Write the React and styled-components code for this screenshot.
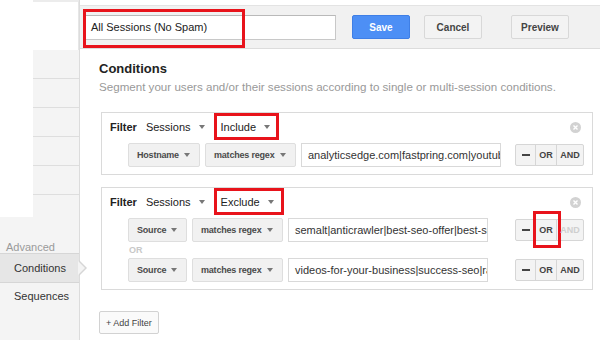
import React from 'react'
import styled, {createGlobalStyle} from 'styled-components'

const GlobalStyle = createGlobalStyle`
    html, body {
        margin: 0;
        padding: 0;
        background: #fff;
    }
    body {
        font-family: "Liberation Sans", Arial, sans-serif;
        color: #333;
    }
`

export default function App() {
    return (
        <>
            <GlobalStyle/>
            <Page>
                <Sidebar>
                    <SideTop/>
                    <SideStack>
                        <SideRow/>
                        <SideRow/>
                        <SideRow/>
                        <SideRow/>
                        <SideRow/>
                        <SideRow $last/>
                    </SideStack>
                    <SideLower>
                        <SideLabel>Advanced</SideLabel>
                        <SideItem $active>
                            Conditions
                            <Pointer/>
                        </SideItem>
                        <SideItem>Sequences</SideItem>
                    </SideLower>
                </Sidebar>

                <Main>
                    {/* top bar with segment name and actions */}
                    <TopBar>
                        <NameField>
                            All Sessions (No Spam)
                            <Highlight $top={-7} $left={-3} $w={162} $h={39}/>
                        </NameField>
                        <Btn $primary>Save</Btn>
                        <Btn $gap={14}>Cancel</Btn>
                        <Btn $gap={29}>Preview</Btn>
                    </TopBar>

                    <Content>
                        <Title>Conditions</Title>
                        <Subtitle>Segment your users and/or their sessions according to single or multi-session conditions.</Subtitle>

                        <FilterBox>
                            <FilterHead>
                                <FilterLabel>Filter</FilterLabel>
                                <Drop>Sessions<Caret/></Drop>
                                <Drop $hl>Include<Caret/></Drop>
                                <CloseIcon/>
                            </FilterHead>
                            <CondRow>
                                <Select $w={72}>Hostname<Caret/></Select>
                                <Select $w={91}>matches regex<Caret/></Select>
                                <TextField>analyticsedge.com|fastpring.com|youtube.com</TextField>
                                <Logic/>
                            </CondRow>
                        </FilterBox>

                        <FilterBox>
                            <FilterHead>
                                <FilterLabel>Filter</FilterLabel>
                                <Drop>Sessions<Caret/></Drop>
                                <Drop $hl $wide>Exclude<Caret/></Drop>
                                <CloseIcon/>
                            </FilterHead>
                            <CondRow>
                                <Select $w={59}>Source<Caret/></Select>
                                <Select $w={91}>matches regex<Caret/></Select>
                                <TextField>semalt|anticrawler|best-seo-offer|best-seo-solution</TextField>
                                <Logic orMarked andDisabled/>
                            </CondRow>
                            <OrLabel>OR</OrLabel>
                            <CondRow>
                                <Select $w={59}>Source<Caret/></Select>
                                <Select $w={91}>matches regex<Caret/></Select>
                                <TextField>videos-for-your-business|success-seo|rank-checker</TextField>
                                <Logic/>
                            </CondRow>
                        </FilterBox>

                        <AddFilter>+ Add Filter</AddFilter>
                    </Content>
                </Main>
            </Page>
        </>
    )
}

function Logic({orMarked, andDisabled}) {
    return (
        <LogicGroup>
            <LogicBtn $w={19}><Dash/></LogicBtn>
            <LogicBtn $w={20}>
                OR
                {orMarked && <Highlight $top={-9} $left={-3} $w={28} $h={37}/>}
            </LogicBtn>
            <LogicBtn $w={26} $disabled={andDisabled}>AND</LogicBtn>
        </LogicGroup>
    )
}

function CloseIcon() {
    return (
        <CloseWrap width="11" height="11" viewBox="0 0 11 11">
            <circle cx="5.5" cy="5.5" r="5.5" fill="#d2d2d2"/>
            <path d="M3.5 3.5 L7.5 7.5 M7.5 3.5 L3.5 7.5" stroke="#fff" strokeWidth="1.4"/>
        </CloseWrap>
    )
}

// layout
const Page = styled.div`
    width: 600px;
    height: 340px;
    overflow: hidden;
    display: grid;
    grid-template-columns: 80px 1fr;
`

// left navigation
const Sidebar = styled.div`
    display: flex;
    flex-direction: column;
    border-right: 1px solid #dcdcdc;
    background: #fff;
`

const SideTop = styled.div`
    height: 50px;
    margin-left: 33px;
    border-top: 2px solid #ececec;
    border-right: 1px solid #e6e6e6;
    box-sizing: border-box;
`

const SideStack = styled.div`
    margin-left: 33px;
    background: #f4f4f4;
`

const SideRow = styled.div`
    height: ${p => p.$last ? '22px' : '28px'};
    border-bottom: ${p => p.$last ? 'none' : '1px solid #dedede'};
`

const SideLower = styled.div`
    flex: 1;
    background: #f4f4f4;
    padding-top: 25px;
`

const SideLabel = styled.div`
    font-size: 11px;
    color: #9a9a9a;
    padding-left: 6px;
    line-height: 11px;
`

const SideItem = styled.div`
    position: relative;
    height: ${p => p.$active ? '28px' : '27px'};
    line-height: ${p => p.$active ? '28px' : '27px'};
    font-size: 11px;
    color: #333;
    padding-left: 14px;
    background: ${p => p.$active ? '#e6e6e6' : 'transparent'};
    border-top: ${p => p.$active ? '1px solid #d6d6d6' : 'none'};
    border-bottom: ${p => p.$active ? '1px solid #d6d6d6' : 'none'};
`

const Pointer = styled.span`
    position: absolute;
    right: -8px;
    top: 6px;
    width: 0;
    height: 0;
    border-top: 8px solid transparent;
    border-bottom: 8px solid transparent;
    border-left: 8px solid #d6d6d6;
    &::after {
        content: '';
        position: absolute;
        left: -9px;
        top: -7px;
        border-top: 7px solid transparent;
        border-bottom: 7px solid transparent;
        border-left: 7px solid #f4f4f4;
    }
`

// main area
const Main = styled.div`
    display: flex;
    flex-direction: column;
    min-width: 0;
`

const TopBar = styled.div`
    margin-top: 5px;
    height: 44px;
    box-sizing: border-box;
    background: #f1f1f1;
    border-top: 1px solid #e3e3e3;
    border-bottom: 1px solid #dcdcdc;
    display: flex;
    align-items: center;
    padding-left: 5px;
`

const NameField = styled.div`
    position: relative;
    width: 251px;
    height: 25px;
    box-sizing: border-box;
    background: #fff;
    border: 1px solid #c8c8c8;
    border-top-color: #b9b9b9;
    font-size: 11px;
    color: #222;
    line-height: 23px;
    padding-left: 5px;
    margin-right: 16px;
`

const Highlight = styled.span`
    position: absolute;
    top: ${p => p.$top}px;
    left: ${p => p.$left}px;
    width: ${p => p.$w}px;
    height: ${p => p.$h}px;
    box-sizing: border-box;
    border: 3px solid #e8131b;
    pointer-events: none;
`

const Btn = styled.div`
    width: 58px;
    height: 24px;
    margin-left: ${p => p.$gap || 0}px;
    box-sizing: border-box;
    border-radius: 2px;
    display: flex;
    align-items: center;
    justify-content: center;
    font-size: 10px;
    font-weight: bold;
    color: ${p => p.$primary ? '#fff' : '#444'};
    background: ${p => p.$primary ? '#4d8ff5' : '#f3f3f3'};
    border: 1px solid ${p => p.$primary ? '#3f7fe6' : '#d8d8d8'};
`

const Content = styled.div`
    padding: 12px 7px 0 19px;
`

const Title = styled.div`
    font-size: 13px;
    font-weight: bold;
    color: #222;
    line-height: 16px;
`

const Subtitle = styled.div`
    font-size: 11.6px;
    color: #999;
    line-height: 16px;
    margin-top: 2px;
    margin-bottom: 17px;
`

const FilterBox = styled.div`
    margin-left: 2px;
    border: 1px solid #dadada;
    padding-bottom: 7px;
    margin-bottom: 12px;
`

const FilterHead = styled.div`
    position: relative;
    height: 27px;
    margin-bottom: 3px;
    display: flex;
    align-items: center;
    padding-left: 8px;
    font-size: 11px;
    color: #222;
`

const FilterLabel = styled.span`
    font-weight: bold;
    margin-right: 9px;
`

const Drop = styled.span`
    position: relative;
    display: flex;
    align-items: center;
    height: 27px;
    box-sizing: border-box;
    padding: 0 ${p => p.$wide ? '10px' : '9px'} 0 7px;
    margin-left: ${p => p.$hl ? '0' : '-7px'};
    gap: 8px;
    ${p => p.$hl && `
        box-shadow: inset 0 0 0 3px #e8131b;
    `}
`

const Caret = styled.span`
    display: inline-block;
    flex-shrink: 0;
    width: 0;
    height: 0;
    border-left: 3.5px solid transparent;
    border-right: 3.5px solid transparent;
    border-top: 4px solid #777;
    margin-left: auto;
`

const CloseWrap = styled.svg`
    position: absolute;
    right: 11px;
    top: 9px;
`

const CondRow = styled.div`
    display: flex;
    align-items: center;
    padding-left: 26px;
    padding-right: 8px;
    height: 24px;
    gap: 4px;
`

const Select = styled.div`
    width: ${p => p.$w}px;
    flex-shrink: 0;
    height: 24px;
    box-sizing: border-box;
    display: flex;
    align-items: center;
    padding: 0 9px 0 8px;
    background: #f1f1f1;
    border: 1px solid #dedede;
    border-radius: 2px;
    font-size: 9px;
    letter-spacing: -0.2px;
    font-weight: bold;
    color: #4a4a4a;
    white-space: nowrap;
    margin-right: 1px;
`

const TextField = styled.div`
    width: 200px;
    flex-shrink: 0;
    height: 24px;
    box-sizing: border-box;
    border: 1px solid #d9d9d9;
    font-size: 11px;
    color: #333;
    line-height: 22px;
    padding-left: 6px;
    white-space: nowrap;
    overflow: hidden;
`

const LogicGroup = styled.div`
    margin-left: auto;
    flex-shrink: 0;
    display: flex;
    height: 22px;
    box-sizing: border-box;
    border: 1px solid #d6d6d6;
    border-radius: 2px;
    background: #f3f3f3;
`

const LogicBtn = styled.div`
    position: relative;
    width: ${p => p.$w}px;
    display: flex;
    align-items: center;
    justify-content: center;
    font-size: 9px;
    font-weight: bold;
    color: ${p => p.$disabled ? '#cfcfcf' : '#444'};
    & + & {
        border-left: 1px solid #d6d6d6;
    }
`

const Dash = styled.span`
    width: 8px;
    height: 2px;
    background: #444;
`

const OrLabel = styled.div`
    font-size: 9px;
    font-weight: bold;
    color: #c8c8c8;
    padding-left: 27px;
    height: 16px;
    line-height: 16px;
`

const AddFilter = styled.div`
    display: inline-flex;
    align-items: center;
    height: 23px;
    box-sizing: border-box;
    padding: 0 6px;
    margin-top: 9px;
    border: 1px solid #d2d2d2;
    border-radius: 2px;
    background: #fafafa;
    font-size: 9px;
    color: #444;
`
